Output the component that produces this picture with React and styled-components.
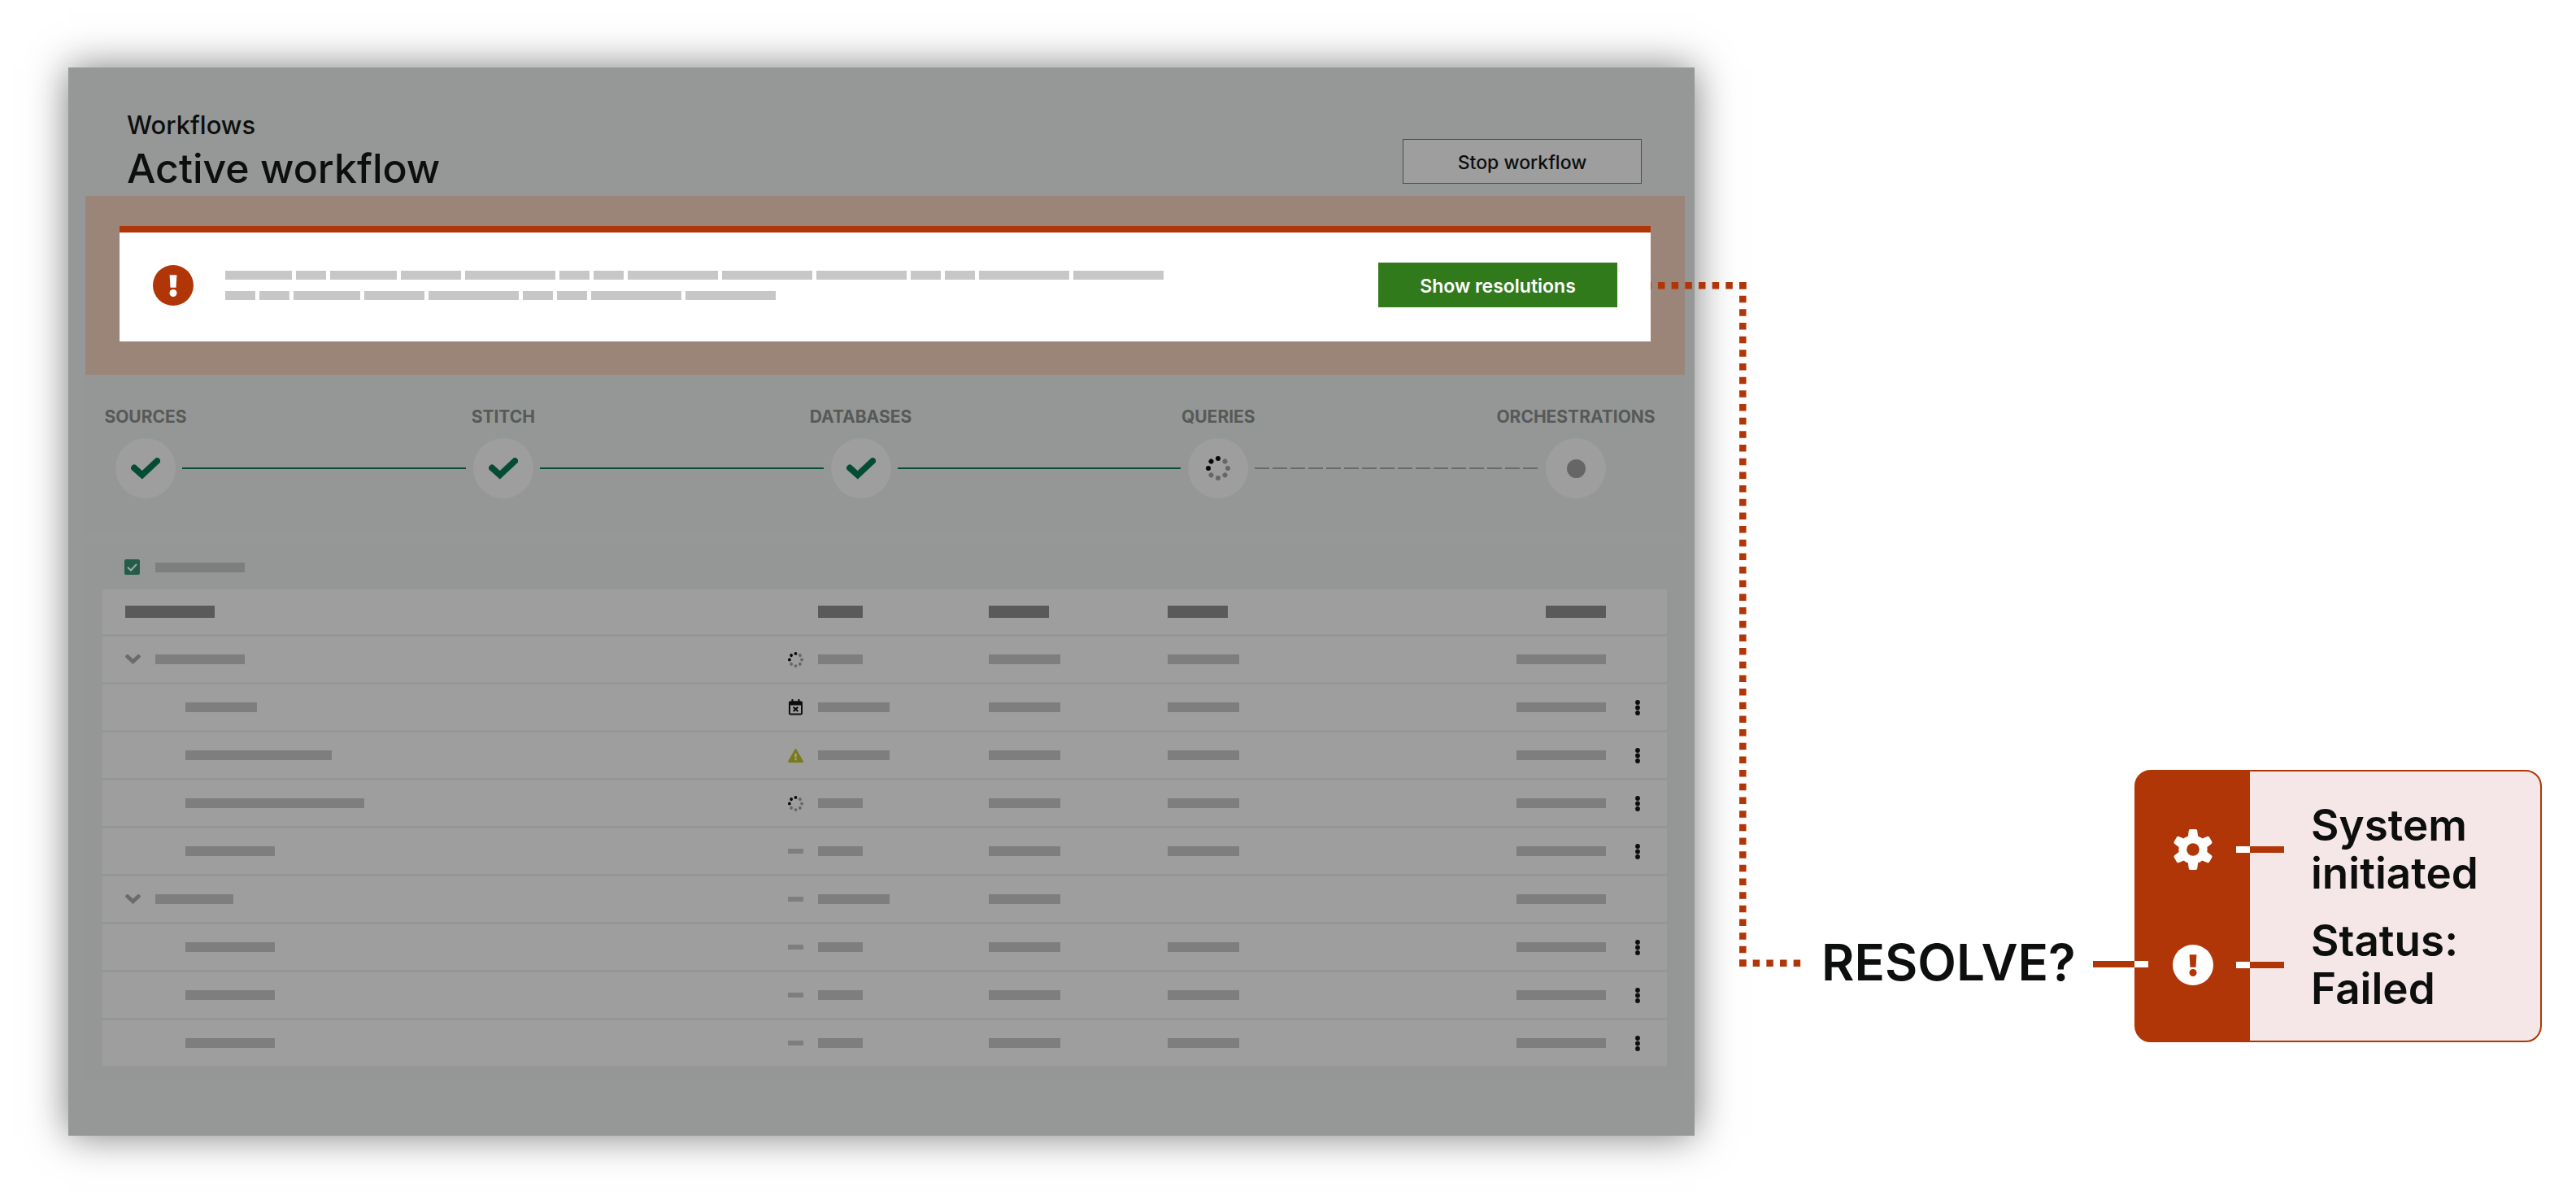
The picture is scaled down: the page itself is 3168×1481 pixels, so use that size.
import React from "react";
import styled, { createGlobalStyle } from "styled-components";

const rust = "#b03608";
const ink = "#0d0e0e";
const green = "#044d35";

const GlobalStyle = createGlobalStyle`
  *, *::before, *::after { box-sizing: border-box; }
  body { margin: 0; background: #fff; color: ${ink}; font-family: Inter, "Open Sans", sans-serif; }
  h1, p, ol, ul { margin: 0; padding: 0; list-style: none; }
  button { font-family: inherit; padding: 0; cursor: pointer; }
  svg { display: block; flex: none; }
`;

const Page = styled.main`
  display: flex;
  align-items: stretch;
  padding: 83px 42px 84px 84px;
`;

/* ---------- dimmed application window ---------- */

const Window = styled.section`
  flex: 1;
  min-width: 0;
  padding-bottom: 67px;
  background: #959896;
  box-shadow: 0 0 46px rgba(0, 0, 0, 0.52);
`;

const Header = styled.header`
  display: flex;
  justify-content: space-between;
  align-items: flex-end;
  padding: 53px 65px 4px 72px;
`;

const Breadcrumb = styled.p`
  margin-bottom: 5px;
  font-size: 31px;
  line-height: 36px;
  font-weight: 500;
`;

const Title = styled.h1`
  font-size: 50px;
  line-height: 60px;
  font-weight: 500;
`;

const Button = styled.button`
  flex: none;
  width: 294px;
  height: 55px;
  padding-top: 2px;
  font-size: 23px;
  line-height: 28px;
  color: ${(p) => (p.$primary ? "#fff" : ink)};
  font-weight: ${(p) => (p.$primary ? 600 : 500)};
  background: ${(p) => (p.$primary ? "#317a1b" : "#9e9e9e")};
  border: ${(p) => (p.$primary ? "0" : "1px solid #4c4d4c")};
`;

const HeaderAction = styled.div`
  padding-bottom: 11px;
`;

const AlertBand = styled.div`
  margin: 0 12px 0 21px;
  padding: 37px 42px 41px;
  background: #9b8579;
`;

const Alert = styled.div`
  display: flex;
  align-items: center;
  padding: 37px 41px 42px;
  background: #fff;
  border-top: 8px solid ${rust};
`;

const AlertText = styled.div`
  display: grid;
  gap: 14px;
  margin: 0 auto 0 39px;
`;

const BarLine = styled.div`
  display: flex;
  gap: 5px;
`;

const Bar = styled.span`
  display: block;
  flex: none;
  width: ${(p) => p.$w}px;
  height: ${(p) => p.$h || 12}px;
  background: ${(p) => p.$color || "#7e7e7e"};
`;

const Section = styled.section`
  margin: 0 12px 11px 21px;
  background: #949795;
`;

const Steps = styled.ol`
  display: flex;
  align-items: flex-end;
  padding: 40px 97px 44px 37px;
`;

const Step = styled.li`
  display: flex;
  flex: none;
  flex-direction: column;
  align-items: center;
  gap: 14px;
  width: 74px;
`;

const StepLabel = styled.span`
  font-size: 21px;
  line-height: 24px;
  font-weight: 700;
  white-space: nowrap;
  color: #575958;
`;

const StepDisc = styled.span`
  display: grid;
  place-items: center;
  width: 74px;
  height: 74px;
  border-radius: 50%;
  background: #9e9e9e;
`;

const Pending = styled.span`
  width: 23px;
  height: 23px;
  border-radius: 50%;
  background: #666;
`;

const StepLine = styled.li`
  flex: 1;
  height: 2px;
  margin: 0 9px 36px 8px;
  background: ${(p) =>
    p.$dashed
      ? "repeating-linear-gradient(to right, #696b6a 0 18px, transparent 18px 22px)"
      : green};
`;

const TableArea = styled(Section)`
  margin-bottom: 0;
  padding: 20px 22px 19px 21px;
`;

const Toolbar = styled.div`
  display: flex;
  align-items: center;
  gap: 19px;
  padding: 0 0 18px 27px;
`;

const Tick = styled.label`
  display: grid;
  width: 19px;
  height: 19px;
  > * { grid-area: 1 / 1; }
  > svg { pointer-events: none; }
`;

const Checkbox = styled.input`
  appearance: none;
  width: 19px;
  height: 19px;
  margin: 0;
  border-radius: 2px;
  background: #245c4a;
`;

const Table = styled.table`
  width: 100%;
  table-layout: fixed;
  border-collapse: separate;
  border-spacing: 0;
  td, th { padding: 0; background: #9e9e9e; border-bottom: 3px solid #949795; text-align: left; }
  th { height: 58px; }
  td { height: 59px; }
  tbody tr:last-child td { height: 56px; border-bottom: 0; }
`;

const Col = styled.col`
  width: ${(p) => (p.$w ? p.$w + "px" : "auto")};
`;

const Cell = styled.div`
  display: flex;
  align-items: center;
  gap: 18px;
  padding-left: ${(p) => p.$indent || 0}px;
  justify-content: ${(p) => p.$align || "flex-start"};
`;

const IconButton = styled.button`
  display: grid;
  place-items: center;
  width: 19px;
  height: 24px;
  background: none;
  border: 0;
`;

/* ---------- annotation ---------- */

const Note = styled.aside`
  display: flex;
  flex: none;
  align-items: flex-end;
  margin-left: -54px;
  padding-bottom: 115px;
`;

const Elbow = styled.svg`
  width: 185px;
  height: 842px;
  margin: 0 25px 93px 0;
`;

const Question = styled.p`
  width: 334px;
  margin-bottom: 62px;
  font-size: 62px;
  line-height: 72px;
  font-weight: 600;
  white-space: nowrap;
`;

const Lead = styled.span`
  position: relative;
  flex: none;
  width: 68px;
  height: 8px;
  margin: 0 -17px 92px 0;
  background: linear-gradient(to right, ${rust} 51px, #fff 51px);
`;

const Legend = styled.ul`
  display: grid;
  gap: 24px;
  width: 501px;
  padding: 37px 30px 34px 0;
  border: 2px solid ${rust};
  border-radius: 20px;
  background: linear-gradient(to right, ${rust} 140px, #f5e7e7 140px);
`;

const LegendItem = styled.li`
  display: flex;
  align-items: center;
  font-size: 53px;
  line-height: 59px;
  font-weight: 600;
`;

const LegendIcon = styled.span`
  display: grid;
  flex: none;
  place-items: center;
  width: 140px;
`;

const LegendLead = styled.span`
  flex: none;
  width: 59px;
  height: 8px;
  margin: 0 33px 0 -17px;
  background: linear-gradient(to right, #fff 17px, ${rust} 17px);
`;

/* ---------- drawings ---------- */

const AlertIcon = ({ disc, mark }) => (
  <svg width="50" height="50" viewBox="0 0 50 50" aria-hidden="true">
    <circle cx="25" cy="25" r="25" fill={disc} />
    <path d="M20.6 12.3h8.8l-.9 15.4h-7z" fill={mark} />
    <circle cx="25" cy="34.5" r="4.5" fill={mark} />
  </svg>
);

const GearIcon = () => (
  <svg width="50" height="50" viewBox="0 0 50 50" aria-hidden="true">
    <g fill="#fff">
      {[0, 60, 120, 180, 240, 300].map((a) => (
        <path
          key={a}
          transform={`rotate(${a} 25 25)`}
          d="M17.5 10.5l1.3-.9.9-7.6Q20 0 21.8 0h6.4q1.8 0 2.1 2l.9 7.6 1.3.9L29 25h-8z"
        />
      ))}
      <circle cx="25" cy="25" r="17.6" />
    </g>
    <circle cx="25" cy="25" r="7.8" fill={rust} />
  </svg>
);

const StepCheck = () => (
  <svg width="36" height="27" viewBox="0 0 36 27" aria-hidden="true">
    <path d="M4 12.5L13.8 21.3L32.2 4" fill="none" stroke={green} strokeWidth="7.8" strokeLinecap="round" />
  </svg>
);

const Spinner = ({ size }) => (
  <svg width={size} height={size} viewBox="0 0 30 30" aria-hidden="true">
    {[0, 1, 2, 3, 4, 5, 6, 7].map((i) => (
      <circle
        key={i}
        cx="15"
        cy="3"
        r="3"
        transform={`rotate(${i * 45} 15 15)`}
        fill={i === 0 || i > 5 ? "#080808" : "#666"}
      />
    ))}
  </svg>
);

const CalendarIcon = () => (
  <svg width="19" height="20" viewBox="0 0 19 20" aria-hidden="true">
    <path d="M5.5 0v4M13.5 0v4" stroke={ink} strokeWidth="2" />
    <rect x="2" y="3.2" width="15" height="15.3" rx="1.5" fill="none" stroke={ink} strokeWidth="2" />
    <rect x="1.5" y="3" width="16" height="4.5" fill={ink} />
    <path d="M6.7 9.8l5.6 5.2M12.3 9.8l-5.6 5.2" stroke={ink} strokeWidth="2.2" />
  </svg>
);

const WarningIcon = () => (
  <svg width="19" height="17" viewBox="0 0 19 17" aria-hidden="true">
    <path d="M9.5 1.2L17.8 15.8H1.2z" fill="#7a7a18" stroke="#7a7a18" strokeWidth="2.2" strokeLinejoin="round" />
    <path d="M8.2 6h2.6l-.4 5H8.6zM8.3 12h2.4v2.2H8.3z" fill="#a2a2a2" />
  </svg>
);

const Chevron = () => (
  <svg width="19" height="12" viewBox="0 0 19 12" aria-hidden="true">
    <path d="M2.7 2.6l6.8 6.2L16.300 2.6" fill="none" stroke="#6b6b6b" strokeWidth="4.8" strokeLinecap="round" />
  </svg>
);

const Kebab = () => (
  <svg width="6" height="19" viewBox="0 0 6 19" aria-hidden="true">
    {[3, 9.5, 16].map((y) => (
      <circle key={y} cx="3" cy={y} r="2.9" fill={ink} />
    ))}
  </svg>
);

const statusIcon = {
  running: <Spinner size={19} />,
  scheduled: <CalendarIcon />,
  warning: <WarningIcon />,
  none: <Bar $w={19} $h={6} />,
};

/* ---------- data ---------- */

const alertLines = [
  [82, 37, 82, 74, 111, 37, 37, 111, 111, 111, 37, 37, 111, 111],
  [37, 37, 82, 74, 111, 37, 37, 111, 111],
];

const steps = [
  { label: "SOURCES", state: "done" },
  { label: "STITCH", state: "done" },
  { label: "DATABASES", state: "done" },
  { label: "QUERIES", state: "running" },
  { label: "ORCHESTRATIONS", state: "pending" },
];

const rows = [
  { group: true, name: 110, status: "running", text: 55, end: true },
  { name: 88, status: "scheduled", text: 88, end: true },
  { name: 180, status: "warning", text: 88, end: true },
  { name: 220, status: "running", text: 55, end: true },
  { name: 110, status: "none", text: 55, end: true },
  { group: true, name: 96, status: "none", text: 88, end: false },
  { name: 110, status: "none", text: 55, end: true },
  { name: 110, status: "none", text: 55, end: true },
  { name: 110, status: "none", text: 55, end: true },
];

const stepIcon = {
  done: <StepCheck />,
  running: <Spinner size={30} />,
  pending: <Pending />,
};

const HeadBar = ({ w }) => <Bar $w={w} $h={15} $color="#5a5a5a" />;

export default function App() {
  return (
    <>
      <GlobalStyle />
      <Page>
        <Window>
          <Header>
            <div>
              <Breadcrumb>Workflows</Breadcrumb>
              <Title>Active workflow</Title>
            </div>
            <HeaderAction>
              <Button type="button">Stop workflow</Button>
            </HeaderAction>
          </Header>

          <AlertBand>
            <Alert role="alert">
              <AlertIcon disc={rust} mark="#fff" />
              <AlertText>
                {alertLines.map((line, i) => (
                  <BarLine key={i}>
                    {line.map((w, j) => (
                      <Bar key={j} $w={w} $h={11} $color="#c7c7c7" />
                    ))}
                  </BarLine>
                ))}
              </AlertText>
              <Button type="button" $primary>Show resolutions</Button>
            </Alert>
          </AlertBand>

          <Section>
            <Steps>
              {steps.map((step, i) => (
                <React.Fragment key={step.label}>
                  {i > 0 && <StepLine aria-hidden="true" $dashed={step.state === "pending"} />}
                  <Step>
                    <StepLabel>{step.label}</StepLabel>
                    <StepDisc>{stepIcon[step.state]}</StepDisc>
                  </Step>
                </React.Fragment>
              ))}
            </Steps>
          </Section>

          <TableArea>
            <Toolbar>
              <Tick htmlFor="show-all">
                <Checkbox id="show-all" type="checkbox" defaultChecked aria-label="Show all" />
                <svg width="19" height="19" viewBox="0 0 19 19" aria-hidden="true">
                  <path d="M4 9.8l4 3.7L15 6" fill="none" stroke="#a3a7a5" strokeWidth="2" />
                </svg>
              </Tick>
              <Bar $w={110} />
            </Toolbar>
            <Table>
              <colgroup>
                <Col />
                <Col $w={247} />
                <Col $w={220} />
                <Col $w={220} />
                <Col $w={319} />
                <Col $w={75} />
              </colgroup>
              <thead>
                <tr>
                  <th><Cell $indent={28}><HeadBar w={110} /></Cell></th>
                  <th><Cell $indent={37}><HeadBar w={55} /></Cell></th>
                  <th><Cell><HeadBar w={74} /></Cell></th>
                  <th><Cell><HeadBar w={74} /></Cell></th>
                  <th><Cell $align="flex-end"><HeadBar w={74} /></Cell></th>
                  <th />
                </tr>
              </thead>
              <tbody>
                {rows.map((row, i) => (
                  <tr key={i}>
                    <td>
                      <Cell $indent={row.group ? 28 : 102}>
                        {row.group && (
                          <IconButton type="button" aria-label="Collapse group"><Chevron /></IconButton>
                        )}
                        <Bar $w={row.name} />
                      </Cell>
                    </td>
                    <td><Cell>{statusIcon[row.status]}<Bar $w={row.text} /></Cell></td>
                    <td><Cell><Bar $w={88} /></Cell></td>
                    <td><Cell>{row.end && <Bar $w={88} />}</Cell></td>
                    <td><Cell $align="flex-end"><Bar $w={110} /></Cell></td>
                    <td>
                      <Cell $align="center" $indent={3}>
                        {!row.group && (
                          <IconButton type="button" aria-label="Row actions"><Kebab /></IconButton>
                        )}
                      </Cell>
                    </td>
                  </tr>
                ))}
              </tbody>
            </Table>
          </TableArea>
        </Window>

        <Note>
          <Elbow viewBox="0 0 185 842" aria-hidden="true">
            <g fill="none" stroke={rust} strokeWidth="8.5" strokeDasharray="8.5 8.17">
              <path d="M117.5 4.3H0" />
              <path d="M113.3 0V842" />
              <path d="M109 837.7H185" />
            </g>
          </Elbow>
          <Question>RESOLVE?</Question>
          <Lead />
          <Legend>
            <LegendItem>
              <LegendIcon><GearIcon /></LegendIcon>
              <LegendLead />
              <span>System initiated</span>
            </LegendItem>
            <LegendItem>
              <LegendIcon><AlertIcon disc="#fff" mark={rust} /></LegendIcon>
              <LegendLead />
              <span>Status: Failed</span>
            </LegendItem>
          </Legend>
        </Note>
      </Page>
    </>
  );
}
